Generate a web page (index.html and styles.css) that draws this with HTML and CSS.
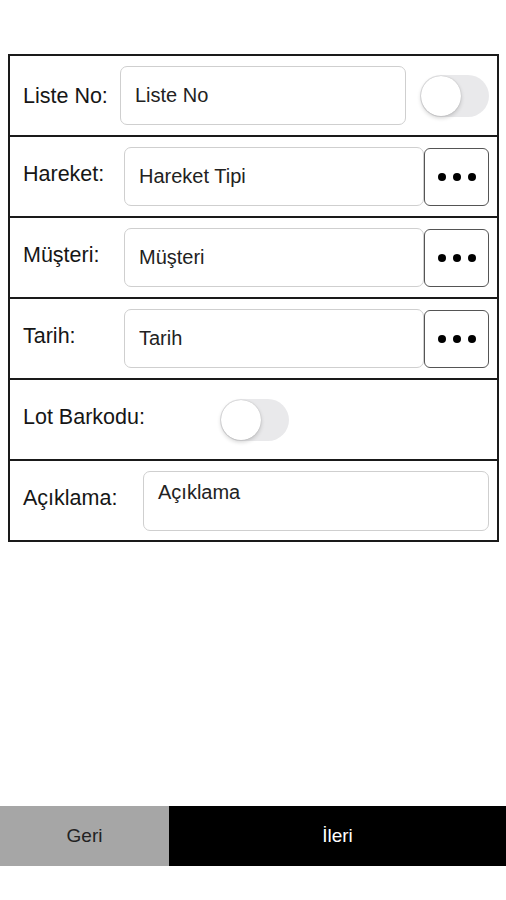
FILE: index.html
```html
<!DOCTYPE html>
<html lang="tr">
<head>
  <meta charset="UTF-8" />
  <meta name="viewport" content="width=device-width, initial-scale=1.0"/>
  <title>Hareket</title>
  <link rel="stylesheet" href="styles.css">
</head>
<body>
  <div class="screen">
    <div class="form">
      <!-- Liste No -->
      <div class="row">
        <label class="label label-liste">Liste No:</label>
        <input class="field field-liste" type="text" placeholder="Liste No">
        <span class="toggle"><span class="knob"></span></span>
      </div>

      <!-- Hareket -->
      <div class="row">
        <label class="label label-pick">Hareket:</label>
        <input class="field" type="text" placeholder="Hareket Tipi">
        <button class="more"><span></span><span></span><span></span></button>
      </div>

      <!-- Müşteri -->
      <div class="row">
        <label class="label label-pick">Müşteri:</label>
        <input class="field" type="text" placeholder="Müşteri">
        <button class="more"><span></span><span></span><span></span></button>
      </div>

      <!-- Tarih -->
      <div class="row">
        <label class="label label-pick">Tarih:</label>
        <input class="field" type="text" placeholder="Tarih">
        <button class="more"><span></span><span></span><span></span></button>
      </div>

      <!-- Lot Barkodu -->
      <div class="row">
        <label class="label label-lot">Lot Barkodu:</label>
        <span class="toggle"><span class="knob"></span></span>
      </div>

      <!-- Açıklama -->
      <div class="row">
        <label class="label label-note">Açıklama:</label>
        <textarea class="field note" placeholder="Açıklama"></textarea>
      </div>
    </div>

    <div class="bottom">
      <button class="nav back">Geri</button>
      <button class="nav next">İleri</button>
    </div>
  </div>
</body>
</html>
```

FILE: styles.css
```css
body {
  font-family: "Liberation Sans", Arial, sans-serif;
  margin: 0;
  padding: 0;
  background: #fff;
  color: #111;
}
.screen {
  display: flex;
  flex-direction: column;
  height: 900px;
}
.form {
  margin: 54px 7px 0 8px;
  border: 2px solid #1a1a1a;
}
.row {
  display: flex;
  align-items: center;
  height: 79px;
  padding: 0 8px 0 13px;
  border-top: 2px solid #1a1a1a;
}
.row:first-child {
  border-top: none;
}
.label {
  font-size: 21.5px;
  color: #161616;
  flex-shrink: 0;
  margin-top: -4px;
}
.label-liste { width: 97px; margin-top: 2px; }
.label-pick { width: 101px; }
.label-lot { width: 197px; }
.label-note { width: 120px; margin-top: -4px; }
.field {
  flex: 1;
  height: 59px;
  box-sizing: border-box;
  border: 1.5px solid #cfcfcf;
  border-radius: 7px;
  padding: 0 14px;
  font-family: inherit;
  font-size: 20px;
  color: #222;
  outline: none;
  background: #fff;
}
.field::placeholder {
  color: #222;
}
.field-liste {
  flex: none;
  width: 286px;
  margin-right: auto;
}
.note {
  height: 60px;
  padding: 9px 14px 0;
  resize: none;
  line-height: 22px;
}
.more {
  width: 65px;
  height: 58px;
  flex-shrink: 0;
  border: 1.5px solid #555;
  border-radius: 6px;
  background: #fff;
  display: flex;
  align-items: center;
  justify-content: center;
  gap: 7px;
  padding: 0;
  cursor: pointer;
}
.more span {
  width: 8px;
  height: 8px;
  border-radius: 50%;
  background: #000;
}
.toggle {
  position: relative;
  width: 69px;
  height: 42px;
  border-radius: 21px;
  background: #e9e9eb;
  flex-shrink: 0;
}
.knob {
  position: absolute;
  left: 1px;
  top: 1px;
  width: 40px;
  height: 40px;
  border-radius: 50%;
  background: #fff;
  box-shadow: 0 2px 4px rgba(0, 0, 0, 0.18), 0 0 1px rgba(0, 0, 0, 0.25);
}
.bottom {
  display: flex;
  height: 60px;
  margin-top: auto;
  margin-bottom: 34px;
}
.nav {
  border: none;
  font-family: inherit;
  font-size: 19px;
  padding: 0;
  cursor: pointer;
}
.back {
  width: 169px;
  background: #a6a6a6;
  color: #222;
}
.next {
  flex: 1;
  background: #000;
  color: #fff;
}
```
